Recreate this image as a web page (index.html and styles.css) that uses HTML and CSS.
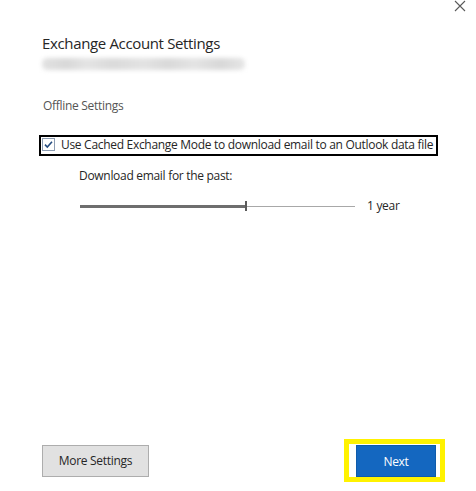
FILE: index.html
```html
<!DOCTYPE html>
<html lang="en">
<head>
<meta charset="utf-8">
<title>Exchange Account Settings</title>
<link rel="stylesheet" href="styles.css">
</head>
<body>
<div class="dialog">
  <button class="close" aria-label="Close">
    <svg width="12" height="12" viewBox="0 0 12 12"><path d="M1 1 L11 11 M11 1 L1 11" stroke="#5a5a5a" stroke-width="1.1" fill="none"/></svg>
  </button>
  <main class="content">
    <h1 class="title">Exchange Account Settings</h1>
    <div class="account"><span class="blur"></span></div>
    <h2 class="section">Offline Settings</h2>
    <label class="cached">
      <span class="check">
        <svg width="13" height="13" viewBox="0 0 13 13"><rect x="0.5" y="0.5" width="12" height="12" fill="#fff" stroke="#8c9cb2"/><path d="M3 6.6 L5.3 9 L10 3.8" stroke="#264d80" stroke-width="1.6" fill="none"/></svg>
      </span>
      <span class="cached-text">Use Cached Exchange Mode to download email to an Outlook data file</span>
    </label>
    <div class="period">
      <div class="period-label">Download email for the past:</div>
      <div class="slider-row">
        <div class="slider">
          <div class="fill"></div>
          <div class="thumb"></div>
          <div class="rest"></div>
        </div>
        <span class="value">1 year</span>
      </div>
    </div>
  </main>
  <footer class="actions">
    <button class="btn">More Settings</button>
    <div class="highlight"><button class="btn primary">Next</button></div>
  </footer>
</div>
</body>
</html>
```
FILE: styles.css
```css
html, body {
  margin: 0;
  padding: 0;
  background: #ffffff;
}

.dialog {
  position: relative;
  width: 476px;
  height: 491px;
  display: flex;
  flex-direction: column;
  font-family: "Open Sans", "Noto Sans", sans-serif;
  color: #262626;
  background: #ffffff;
}

.close {
  position: absolute;
  top: 0;
  left: 454px;
  width: 12px;
  height: 12px;
  padding: 0;
  margin: 0;
  border: 0;
  background: transparent;
  display: block;
}
.close svg { display: block; }

.content {
  padding: 33px 0 0 42px;
  display: flex;
  flex-direction: column;
  align-items: flex-start;
}

.title {
  margin: 0;
  font-size: 15px;
  line-height: 20px;
  font-weight: 400;
  letter-spacing: -0.35px;
  color: #262626;
}

.account {
  margin-top: 2px;
  width: 203px;
  height: 17px;
  display: flex;
  align-items: center;
}
.blur {
  display: block;
  width: 100%;
  height: 12px;
  border-radius: 5px;
  background: linear-gradient(90deg, #e2e2e2 0%, #d8d8d8 12%, #e4e4e4 22%, #dadada 35%, #e3e3e3 50%, #d9d9d9 62%, #e4e4e4 75%, #d8d8d8 88%, #e6e6e6 100%);
  filter: blur(2px);
}

.section {
  margin: 26px 0 0 1px;
  font-size: 12px;
  line-height: 16px;
  font-weight: 400;
  letter-spacing: -0.3px;
  color: #555555;
}

.cached {
  margin: 21px 0 0 -3px;
  display: flex;
  align-items: flex-start;
  border: 2px solid #000000;
  padding: 0 3px 2px 1px;
}
.check {
  margin-top: 1px;
  width: 13px;
  height: 13px;
  display: block;
}
.check svg { display: block; }
.cached-text {
  margin-left: 6px;
  font-size: 12px;
  line-height: 15px;
  letter-spacing: -0.3px;
  color: #262626;
}

.period {
  margin-top: 12px;
  padding-left: 37px;
}
.period-label {
  font-size: 12px;
  line-height: 16px;
  letter-spacing: -0.3px;
  color: #262626;
}
.slider-row {
  margin-top: 13px;
  height: 18px;
  display: flex;
  align-items: center;
}
.slider {
  margin-left: 1px;
  width: 275px;
  height: 10px;
  display: flex;
  align-items: center;
}
.fill {
  width: 165px;
  height: 3px;
  background: #6e6e6e;
}
.thumb {
  width: 2px;
  height: 10px;
  background: #5a5a5a;
}
.rest {
  flex: 1;
  height: 1px;
  background: #a8a8a8;
}
.value {
  margin-left: 12px;
  font-size: 12px;
  line-height: 16px;
  letter-spacing: -0.3px;
  color: #262626;
}

.actions {
  margin-top: auto;
  padding: 0 31px 9px 42px;
  display: flex;
  justify-content: space-between;
  align-items: center;
}

.btn {
  font-family: "Open Sans", "Noto Sans", sans-serif;
  font-size: 12px;
  letter-spacing: -0.3px;
  height: 32px;
  padding: 0;
  margin: 0;
  border: 1px solid #adadad;
  background: #e1e1e1;
  color: #262626;
  width: 107px;
}

.highlight {
  border: 5px solid #fff200;
  padding: 1px 4px 0 7px;
  display: flex;
}

.btn.primary {
  width: 80px;
  background: #1467c0;
  border: 1px solid #0f5bab;
  color: #ffffff;
}
```
